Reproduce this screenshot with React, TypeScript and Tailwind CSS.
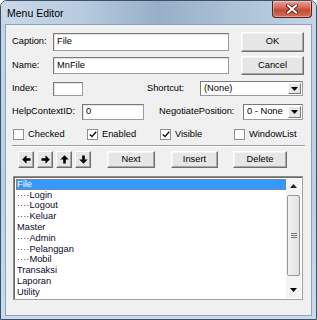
import React from "react";

const font = { fontFamily: '"Liberation Sans", Arial, sans-serif' };

const items: { label: string; sub?: boolean; selected?: boolean }[] = [
  { label: "File", selected: true },
  { label: "Login", sub: true },
  { label: "Logout", sub: true },
  { label: "Keluar", sub: true },
  { label: "Master" },
  { label: "Admin", sub: true },
  { label: "Pelanggan", sub: true },
  { label: "Mobil", sub: true },
  { label: "Transaksi" },
  { label: "Laporan" },
  { label: "Utility" }
];

function TextBox({ value, className }: { value?: string; className: string }) {
  return (
    <div
      className={`flex items-center border border-[#9c9c9c] border-t-[#7a7a7a] border-l-[#7a7a7a] bg-white pl-[3px] text-black shadow-[inset_1px_1px_0_#e3e3e3] ${className}`}
    >
      {value}
    </div>
  );
}

function Button({ label, className }: { label: string; className: string }) {
  return (
    <div
      className={`flex items-center justify-center border border-t-[#fdfdfd] border-l-[#fdfdfd] border-b-[#6f6f6f] border-r-[#6f6f6f] bg-[#e6e6e6] text-black shadow-[inset_-1px_-1px_0_#a8a8a8,inset_1px_1px_0_#f4f4f4] ${className}`}
    >
      {label}
    </div>
  );
}

function Caret() {
  return (
    <svg width="7" height="4" viewBox="0 0 7 4">
      <path d="M0 0h7L3.5 4z" fill="#000" />
    </svg>
  );
}

function Select({ value, className }: { value: string; className: string }) {
  return (
    <div
      className={`flex items-stretch border border-[#9c9c9c] border-t-[#7a7a7a] border-l-[#7a7a7a] bg-white ${className}`}
    >
      <div className="flex flex-1 items-center pl-[3px] text-black">{value}</div>
      <div className="m-[1px] flex w-[13px] items-center justify-center border border-t-white border-l-white border-b-[#7a7a7a] border-r-[#7a7a7a] bg-[#e6e6e6]">
        <Caret />
      </div>
    </div>
  );
}

function Check({ label, checked, className }: { label: string; checked?: boolean; className?: string }) {
  return (
    <div className={`flex items-center ${className ?? ""}`}>
      <div className="flex h-[11px] w-[11px] items-center justify-center border border-[#8e8f8f] bg-white">
        {checked && (
          <svg width="8" height="7" viewBox="0 0 8 7">
            <path d="M0.8 3.4 L3 5.6 L7.2 0.8" stroke="#111" strokeWidth="1.4" fill="none" />
          </svg>
        )}
      </div>
      <span className="ml-[4px] text-black">{label}</span>
    </div>
  );
}

function Arrow({ dir }: { dir: "left" | "right" | "up" | "down" }) {
  const rot = { left: 180, right: 0, up: 270, down: 90 }[dir];
  return (
    <div className="flex h-[17px] w-[16px] items-center justify-center border border-t-[#fdfdfd] border-l-[#fdfdfd] border-b-[#6f6f6f] border-r-[#6f6f6f] bg-[#e6e6e6] shadow-[inset_-1px_-1px_0_#a8a8a8]">
      <svg width="9" height="9" viewBox="0 0 9 9" style={{ transform: `rotate(${rot}deg)` }}>
        <path d="M0.5 3.2h4V0.3L8.8 4.5 4.5 8.7V5.8H0.5z" fill="#000" />
      </svg>
    </div>
  );
}

export default function App() {
  return (
    <div
      className="h-[320px] w-[317px] overflow-hidden rounded-t-[7px] border border-[#3f5064] bg-[linear-gradient(180deg,#c4d5e8_0%,#bccfe4_60%,#c9dbef_100%)] text-[9.3px] leading-none"
      style={font}
    >
      <div className="flex h-[23px] justify-between bg-[linear-gradient(90deg,#c9d9ea_0%,#b8cbdf_25%,#97afc8_50%,#a9bed4_70%,#c3d4e6_100%)]">
        <span className="mt-[7px] ml-[6px] text-[10.5px] text-black">Menu Editor</span>
        <div className="mr-[4px] flex h-[17px] w-[40px] items-center justify-center rounded-b-[4px] border border-t-0 border-[#5b1d1a] bg-[linear-gradient(180deg,#e7a397_0%,#d5634f_45%,#c24a33_55%,#d2705a_100%)] shadow-[inset_0_0_0_1px_rgba(255,255,255,0.35)]">
          <svg width="12" height="10" viewBox="0 0 12 10">
            <path d="M2 1.5 L10 8.5 M10 1.5 L2 8.5" stroke="#4a1510" strokeWidth="3.6" strokeLinecap="square" />
            <path d="M2 1.5 L10 8.5 M10 1.5 L2 8.5" stroke="#fff" strokeWidth="2" strokeLinecap="square" />
          </svg>
        </div>
      </div>

      <div className="ml-[4px] h-[292px] w-[307px] border border-[#8ea2b8] bg-[#f0f0f0] pt-[7px] pl-[6px]">
        <div className="flex h-[20px] items-center">
          <span className="w-[41px] text-black">Caption:</span>
          <TextBox value="File" className="h-[18px] w-[176px]" />
          <Button label="OK" className="ml-[12px] h-[20px] w-[63px]" />
        </div>

        <div className="mt-[4px] flex h-[19px] items-center">
          <span className="w-[41px] text-black">Name:</span>
          <TextBox value="MnFile" className="h-[17px] w-[176px]" />
          <Button label="Cancel" className="ml-[12px] h-[19px] w-[63px]" />
        </div>

        <div className="mt-[6px] flex h-[15px] items-center">
          <span className="w-[41px] text-black">Index:</span>
          <TextBox className="h-[14px] w-[30px]" />
          <span className="ml-[64px] w-[53px] text-black">Shortcut:</span>
          <Select value="(None)" className="h-[15px] w-[103px]" />
        </div>

        <div className="mt-[8px] flex h-[16px] items-center">
          <span className="w-[70px] text-black">HelpContextID:</span>
          <TextBox value="0" className="h-[16px] w-[62px]" />
          <span className="ml-[15px] w-[84px] text-black">NegotiatePosition:</span>
          <Select value="0 - None" className="h-[16px] w-[60px]" />
        </div>

        <div className="mt-[9px] flex h-[11px] items-center pl-[1px]">
          <Check label="Checked" className="w-[74px]" />
          <Check label="Enabled" checked className="w-[73px]" />
          <Check label="Visible" checked className="w-[74px]" />
          <Check label="WindowList" />
        </div>

        <div className="mt-[5px] h-[2px] w-[293px] border-t border-b border-t-[#a0a0a0] border-b-white" />

        <div className="mt-[4px] flex h-[17px] items-center">
          <div className="ml-[6px] flex gap-[3px]">
            <Arrow dir="left" />
            <Arrow dir="right" />
            <Arrow dir="up" />
            <Arrow dir="down" />
          </div>
          <Button label="Next" className="ml-[16px] h-[17px] w-[48px]" />
          <Button label="Insert" className="ml-[16px] h-[17px] w-[47px]" />
          <Button label="Delete" className="ml-[15px] h-[17px] w-[54px]" />
        </div>

        <div className="mt-[8px] ml-[1px] flex h-[124px] w-[290px] border border-[#a0a0a0] border-t-[#8a8a8a] border-l-[#8a8a8a] bg-white p-[1px] shadow-[inset_1px_1px_0_#6a6a6a]">
          <div className="flex flex-1 flex-col pt-[1px] pl-[1px]">
            {items.map((it) => (
              <div
                key={it.label}
                className={`flex h-[11px] items-center pl-[1px] ${
                  it.selected
                    ? "bg-[#3399ff] text-white outline-1 outline-dotted -outline-offset-1 outline-[#c06a6a]"
                    : "text-[#0b0b2a]"
                }`}
              >
                {it.sub && <span className="text-[#5a3050]">····</span>}
                {it.label}
              </div>
            ))}
          </div>
          <div className="flex w-[15px] flex-col bg-[#f4f4f4] pb-[1px]">
            <div className="flex h-[15px] items-center justify-center">
              <svg width="7" height="4" viewBox="0 0 7 4">
                <path d="M0 4h7L3.5 0z" fill="#222" />
              </svg>
            </div>
            <div className="mx-[1px] mt-[2px] flex h-[81px] items-center justify-center rounded-[2px] border border-[#979797] bg-[linear-gradient(90deg,#f3f3f3,#e2e2e2)]">
              <div className="flex flex-col gap-[1px]">
                <div className="h-[1px] w-[6px] bg-[#777]" />
                <div className="h-[1px] w-[6px] bg-[#777]" />
                <div className="h-[1px] w-[6px] bg-[#777]" />
              </div>
            </div>
            <div className="flex-1" />
            <div className="flex h-[15px] items-center justify-center">
              <Caret />
            </div>
          </div>
        </div>
      </div>
    </div>
  );
}
